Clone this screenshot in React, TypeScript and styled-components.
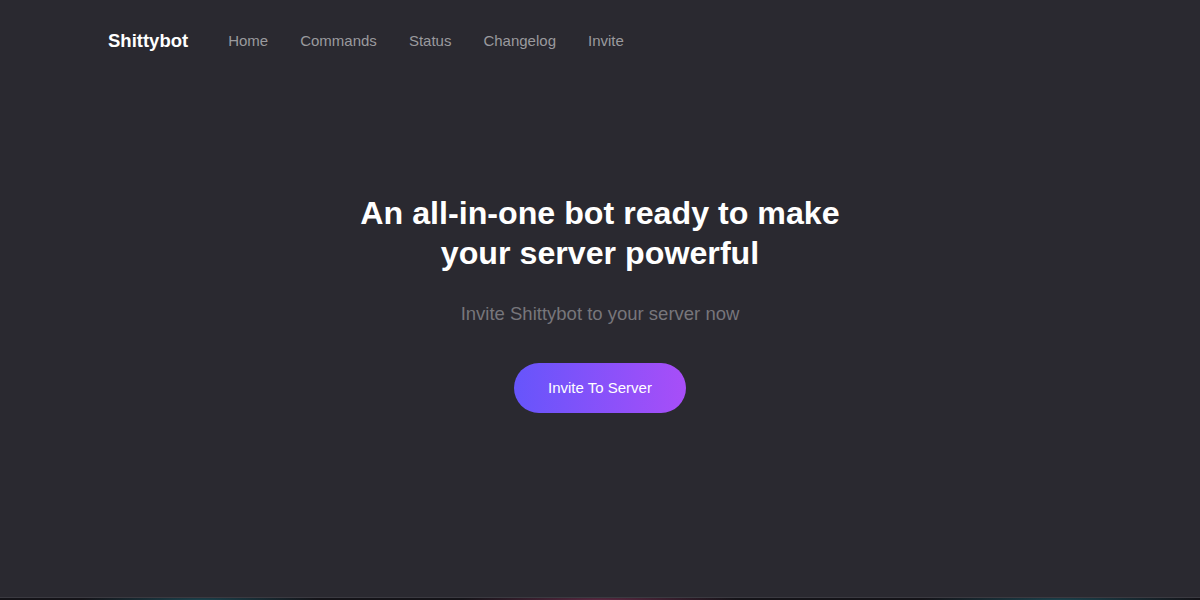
import React from "react";
import styled, { createGlobalStyle } from "styled-components";

const Global = createGlobalStyle`
  html, body { margin: 0; padding: 0; background: #2a2930; }
  body { font-family: "Liberation Sans", Arial, sans-serif; }
  * { box-sizing: border-box; }
`;

const Page = styled.div`
  min-height: 100vh;
  display: flex;
  flex-direction: column;
  background: #2a2930;
`;

const Nav = styled.nav`
  height: 81px;
  display: flex;
  align-items: center;
  padding-left: 108px;
`;

const Brand = styled.a`
  font-size: 18.5px;
  font-weight: 700;
  color: #ffffff;
  text-decoration: none;
  margin-right: 40px;
`;

const NavLinks = styled.div`
  display: flex;
  gap: 32px;
`;

const NavLink = styled.a`
  font-size: 15px;
  color: #9a9a9e;
  text-decoration: none;
`;

const Hero = styled.main`
  flex: 1;
  display: flex;
  flex-direction: column;
  align-items: center;
  padding-top: 112px;
`;

const Title = styled.h1`
  margin: 0;
  font-size: 32.2px;
  line-height: 40px;
  font-weight: 700;
  color: #ffffff;
  text-align: center;
  max-width: 540px;
`;

const Subtitle = styled.p`
  margin: 30px 0 0;
  font-size: 18.5px;
  line-height: 22px;
  color: #77767b;
`;

const Button = styled.a`
  margin-top: 38px;
  width: 172px;
  height: 50px;
  border-radius: 25px;
  display: flex;
  align-items: center;
  justify-content: center;
  background: linear-gradient(90deg, #6655fb 0%, #a84ef8 100%);
  color: #ffffff;
  font-size: 15px;
  text-decoration: none;
  padding-bottom: 2px;
`;

const BottomEdge = styled.div`
  height: 3px;
  border-top: 1px solid #3b3a41;
  background:
    radial-gradient(ellipse 120px 6px at 200px 100%, #1c4550 0%, transparent 100%),
    radial-gradient(ellipse 140px 6px at 600px 100%, #5e2a44 0%, transparent 100%),
    radial-gradient(ellipse 140px 6px at 1060px 100%, #1c4550 0%, transparent 100%),
    #141318;
`;

export default function App() {
  return (
    <Page>
      <Global />
      <Nav>
        <Brand href="#">Shittybot</Brand>
        <NavLinks>
          <NavLink href="#">Home</NavLink>
          <NavLink href="#">Commands</NavLink>
          <NavLink href="#">Status</NavLink>
          <NavLink href="#">Changelog</NavLink>
          <NavLink href="#">Invite</NavLink>
        </NavLinks>
      </Nav>
      <Hero>
        <Title>An all-in-one bot ready to make your server powerful</Title>
        <Subtitle>Invite Shittybot to your server now</Subtitle>
        <Button href="#">Invite To Server</Button>
      </Hero>
      <BottomEdge />
    </Page>
  );
}
